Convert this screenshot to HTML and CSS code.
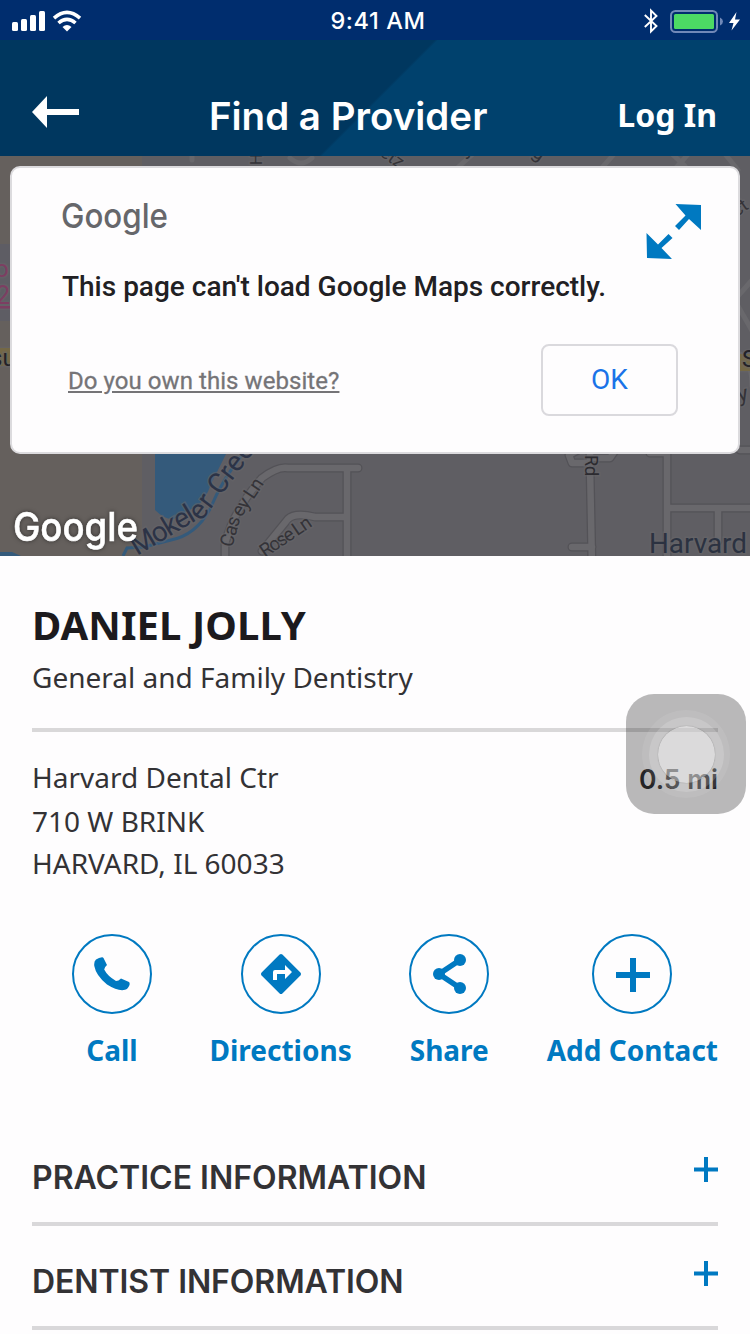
FILE: index.html
```html
<!DOCTYPE html>
<html lang="en">
<head>
<meta charset="utf-8">
<title>Find a Provider</title>
<link rel="stylesheet" href="styles.css">
</head>
<body>
<div class="status">
  <svg class="status-left" width="70" height="22" viewBox="0 0 70 22">
    <g fill="#fff">
      <rect x="0" y="12" width="6" height="9" rx="1.5"/><rect x="9" y="9" width="6" height="12" rx="1.5"/>
      <rect x="18" y="5" width="6" height="16" rx="1.5"/><rect x="27" y="1" width="6" height="20" rx="1.5"/>
      <path d="M50.500 17Q55 13 59.500 17L55 21.400Z"/>
    </g>
    <g fill="none" stroke="#fff" stroke-width="3.600"><path d="M42 8.200Q55-3.300 68 8.200"/><path d="M46.500 13Q55 5.600 63.500 13"/></g>
  </svg>
  <span class="time">9:41 AM</span>
  <svg class="status-right" width="100" height="26" viewBox="0 0 100 26">
    <path d="M.8 7 12.500 18 7 23.500V2.500L12.500 8 .8 19" fill="none" stroke="#fff" stroke-width="1.900"/>
    <rect x="27" y="3" width="46" height="21" rx="4.500" fill="none" stroke="#7189b8" stroke-width="2"/>
    <rect x="30" y="6" width="40" height="15" rx="1.500" fill="#4cd964"/>
    <path d="M76 9.500Q79 11 79 13.500T76 17.500Z" fill="#7189b8"/>
    <path d="M92.500 4 85 15H89.500L87.500 22.500 96 11.500H91Z" fill="#fff"/>
  </svg>
</div>

<header class="header">
  <svg class="back" width="47" height="32" viewBox="0 0 47 32"><path d="M0 16 15 0V13H47V19H15V32Z" fill="#fff"/></svg>
  <h1 class="header-title">Find a Provider</h1>
  <a class="login">Log In</a>
</header>

<section class="map">
  <svg class="map-canvas" width="750" height="400" viewBox="0 0 750 400">
    <rect width="750" height="400" fill="#5f5e63"/>
    <path d="M0 0H142V400H0Z" fill="#65605d"/>
    <path d="M0 88H12V165H0Z" fill="#5e5d64"/>
    <path d="M155 290H230L211 328Q206 343 197 350L174 363Q165 364 155 354Z" fill="#345a7b"/>
    <path d="M0 396H12L21 400H0Z" fill="#345a7b"/>
    <path d="M243 298Q223 322 210 353Q196 379 171 384L144 391 127 392 123 400" fill="none" stroke="#345a7b" stroke-width="3"/>
    <g fill="none" stroke="#535257" stroke-width="9" stroke-linejoin="round" stroke-linecap="round">
      <path d="M225 405V388Q233 355 262 322Q278 310 288 312H358M347 312V405M347 361H315Q295 356 288 363L262 395"/>
      <path d="M590 290V310L592 410M590 307H572L569 299 580 293M592 391H572M592 302H610L617 292M667 290V405M667 352H760M718 352V385M650 297H667M740 294H760"/>
    </g>
    <g fill="none" stroke="#69686c" stroke-width="6.500" stroke-linejoin="round" stroke-linecap="round">
      <path d="M225 405V388Q233 355 262 322Q278 310 288 312H358M347 312V405M347 361H315Q295 356 288 363L262 395"/>
      <path d="M590 290V310L592 410M590 307H572L569 299 580 293M592 391H572M592 302H610L617 292M667 290V405M667 352H760M718 352V385M650 297H667M740 294H760"/>
      <path d="M455 14 475-4M600 14 615-3M670-4 685 10M675 13 690-4M725-2 738 14M192-6V4M290 2Q301 12 312 2M738 140 760 115M738 150 755 180M740 198Q752 205 752 230" stroke-width="5"/>
    </g>
    <g class="map-label">
      <text transform="translate(137 400) rotate(-31)" font-size="28" fill="#2c3346" textLength="70">Mokel</text>
      <text transform="translate(201 366) rotate(-53)" font-size="28" fill="#2c3346" textLength="105">er Creek</text>
      <text transform="translate(232 392) rotate(-74)" font-size="19" fill="#343338" textLength="31">Cas</text>
      <text transform="translate(241 362) rotate(-56)" font-size="19" fill="#343338" textLength="42">ey Ln</text>
      <text transform="translate(265 402) rotate(-34)" font-size="19" fill="#343338" textLength="58">Rose Ln</text>
      <text transform="translate(585 299) rotate(90)" font-size="18" fill="#2c2b30">Rd</text>
      <text x="649" y="397" font-size="28" fill="#2b3241" textLength="98" lengthAdjust="spacingAndGlyphs">Harvard</text>
      <text transform="translate(262 9) rotate(-90)" font-size="16" fill="#343338">H</text>
      <text transform="translate(379 -1) rotate(35)" font-size="18" fill="#343338">etz</text>
      <text transform="translate(531 -1) rotate(35)" font-size="20" fill="#343338">g</text>
      <text x="465" y="-1" font-size="20" fill="#343338">y</text>
      <text x="-5" y="121" font-size="24" fill="#7d3e62">o</text>
      <text x="-4" y="148" font-size="25" fill="#7d3e62" text-decoration="underline">2</text>
      <rect x="0" y="192" width="10" height="18" fill="#746846"/>
      <rect x="739" y="198" width="11" height="17" fill="#746846"/>
      <text x="-10" y="210" font-size="24" fill="#232228">su</text>
      <text x="742" y="211" font-size="24" fill="#232228">S</text>
      <text transform="translate(739 246) rotate(-12)" font-size="22" fill="#343338">y</text>
      <text transform="translate(737 61) rotate(-35)" font-size="18" fill="#343338">ct</text>
    </g>
    <text class="brand brand-shadow" x="13" y="384.500" font-size="40" textLength="125" lengthAdjust="spacingAndGlyphs">Google</text>
  </svg>
  <div class="dialog">
    <svg class="dialog-logo" width="110" height="42" viewBox="0 0 110 42">
      <text class="brand brand-gray" x="-1" y="27.500" font-size="34.500" textLength="107" lengthAdjust="spacingAndGlyphs">Google</text>
    </svg>
    <p class="dialog-title">This page can't load Google Maps correctly.</p>
    <div class="dialog-actions">
      <a class="dialog-link">Do you own this website?</a>
      <button class="dialog-ok">OK</button>
    </div>
    <svg class="expand" width="56" height="55" viewBox="0 0 56 55">
      <path d="M29.500 0 55 1V26L43 15 33 26 29 22 39.500 11.500ZM0.500 29 12 40.500 22.500 30 26.500 34 15.500 44 26 55 1 54Z" fill="#0079c1"/>
    </svg>
  </div>
</section>

<main class="content">
  <h2 class="name">DANIEL JOLLY</h2>
  <p class="specialty">General and Family Dentistry</p>
  <div class="location">
    <address class="address"><span class="line">Harvard Dental Ctr</span><span class="line line-street">710 W BRINK</span><span class="line">HARVARD, IL 60033</span></address>
    <span class="distance">0.5 mi</span>
  </div>
  <nav class="actions">
    <a class="action"><span class="ring">
      <svg width="36" height="34" viewBox="0 0 36 34"><path d="M2 2.500Q5 .500 8 .300Q9 .200 9.500 1L13 8Q10.500 10 10.200 12.500Q13.500 19 22 24Q24.500 24 27 21.500L35 25Q36 26 35.500 28Q34 32 31 32.800Q24 34.500 13 27.500Q2 18.500 .300 9Q-.300 4.500 2 2.500Z" fill="#0079c1"/></svg></span>
      <span class="action-label">Call</span></a>
    <a class="action"><span class="ring">
      <svg width="40" height="40" viewBox="0 0 40 40"><path d="M18.600.600Q20-.600 21.400.600L39.400 18.600Q40.600 20 39.400 21.400L21.400 39.400Q20 40.600 18.600 39.400L.600 21.400Q-.600 20 .600 18.600Z" fill="#0079c1"/><path d="M12 26V18Q12 16 14 16H24V11L31 18 24 25V20H16V26Z" fill="#fff"/></svg></span>
      <span class="action-label">Directions</span></a>
    <a class="action"><span class="ring">
      <svg class="share-icon" width="34" height="40" viewBox="0 0 34 40"><path d="M27 6 6 20 27 34" fill="none" stroke="#0079c1" stroke-width="5.500"/><g fill="#0079c1"><circle cx="27" cy="6" r="6"/><circle cx="6" cy="20" r="6"/><circle cx="27" cy="34" r="6"/></g></svg></span>
      <span class="action-label">Share</span></a>
    <a class="action"><span class="ring ring-add">
      <svg width="34" height="34" viewBox="0 0 34 34"><path d="M14 0H20V14H34V20H20V34H14V20H0V14H14Z" fill="#0079c1"/></svg></span>
      <span class="action-label">Add Contact</span></a>
  </nav>
  <section class="accordion">
    <div class="row"><h3 class="row-title title-practice">PRACTICE INFORMATION</h3>
      <svg width="24" height="25" viewBox="0 0 24 25"><path d="M10 0H14V10.500H24V14.500H14V25H10V14.500H0V10.500H10Z" fill="#0079c1"/></svg></div>
    <div class="row"><h3 class="row-title title-dentist">DENTIST INFORMATION</h3>
      <svg width="24" height="25" viewBox="0 0 24 25"><path d="M10 0H14V10.500H24V14.500H14V25H10V14.500H0V10.500H10Z" fill="#0079c1"/></svg></div>
  </section>
</main>

<div class="assistive"><span class="halo"><span class="halo-mid"><span class="halo-core"></span></span></span></div>
</body>
</html>
```
FILE: styles.css
```css
* { box-sizing: border-box; }
body {
  margin: 0;
  width: 750px;
  height: 1334px;
  overflow: hidden;
  position: relative;
  background: #fefdfe;
  font-family: "Noto Sans", sans-serif;
  color: #333235;
}
h1, h2, h3, p { margin: 0; }
svg { display: block; flex: none; }

.status {
  height: 40px;
  padding: 0 1px 0 12px;
  background: #002d6e;
  display: grid;
  grid-template-columns: 1fr auto 1fr;
  align-items: center;
}
.time {
  color: #fff;
  font: 500 23.5px/42px Inter, sans-serif;
  letter-spacing: .6px;
  margin-right: 5px;
}
.status-right { justify-self: end; margin-right: 5px; }

.header {
  height: 116px;
  padding: 0 33px 0 32px;
  display: flex;
  justify-content: space-between;
  align-items: flex-start;
  background: linear-gradient(135deg, #00375f 50.2%, #00416d 50.6%);
  color: #fff;
}
.back { margin-top: 56px; }
.header-title {
  margin-top: 52px;
  font: 600 38.5px/48px Inter, sans-serif;
  white-space: nowrap;
}
.login {
  margin-top: 55px;
  font-weight: 700;
  font-size: 32px;
  line-height: 40px;
}

.map {
  position: relative;
  height: 400px;
  padding: 10px;
  overflow: hidden;
}
.map-canvas { position: absolute; inset: 0; }
.map-label {
  font-family: Roboto, sans-serif;
  paint-order: stroke;
  stroke: #67666a;
  stroke-width: 3px;
  stroke-opacity: .5;
}
.brand { font-family: Inter, sans-serif; font-weight: 500; }
.brand-gray { fill: #66676b; }
.brand-shadow {
  fill: #fff;
  stroke: #fff;
  stroke-width: .6px;
  filter: drop-shadow(0 0 2px rgba(0, 0, 0, .5));
}

.dialog {
  position: relative;
  height: 288px;
  padding: 28px 60px 0 50px;
  border: 2px solid #dcdbde;
  border-radius: 10px;
  background: #fefdfe;
  font-family: Roboto, sans-serif;
}
.dialog-logo { margin-top: 4px; }
.dialog-title {
  margin-top: 27px;
  font-size: 28px;
  font-weight: 500;
  line-height: 36px;
  color: #212023;
  white-space: nowrap;
}
.dialog-actions {
  margin-top: 39px;
  padding-left: 6px;
  display: flex;
  justify-content: space-between;
  align-items: center;
}
.dialog-link {
  padding-top: 2px;
  font-size: 24px;
  line-height: 30px;
  letter-spacing: .06px;
  color: #757477;
  text-decoration: underline;
  -webkit-text-stroke: .3px #757477;
}
.dialog-ok {
  width: 137px;
  height: 72px;
  padding: 0;
  border: 2px solid #dad9dd;
  border-radius: 8px;
  background: transparent;
  color: #1a73e8;
  font: 400 28px/68px Roboto, sans-serif;
}
.expand { position: absolute; left: 634px; top: 36px; }

.content { padding: 43px 32px 0; }
.name {
  color: #1c1a1d;
  font-size: 40px;
  line-height: 52px;
  letter-spacing: .08px;
}
.specialty {
  margin-top: 6px;
  font-size: 28px;
  line-height: 40px;
}
.location {
  margin-top: 31px;
  padding-top: 24px;
  border-top: 4px solid #d9d8d9;
  display: flex;
  justify-content: space-between;
}
.address {
  font-size: 28px;
  line-height: 43px;
  font-style: normal;
}
.line { display: block; }
.line-street { padding-top: 1px; line-height: 42px; padding-bottom: 0; }
.distance { font: 600 26.5px/46px Inter, sans-serif; }

.actions {
  margin: 49px 0 0 40px;
  display: flex;
  justify-content: space-between;
}
.action { display: flex; flex-direction: column; align-items: center; }
.ring {
  width: 80px;
  height: 80px;
  border: 2px solid #0079c1;
  border-radius: 50%;
  display: flex;
  align-items: center;
  justify-content: center;
}
.ring-add { padding: 2px 0 0 2px; }
.share-icon { margin-left: 2px; }
.action-label {
  margin-top: 16px;
  color: #0079c1;
  font-weight: 700;
  font-size: 28px;
  line-height: 40px;
  white-space: nowrap;
}

.accordion { margin-top: 52px; }
.row {
  height: 104px;
  padding-top: 35px;
  border-bottom: 4px solid #d9d8da;
  display: flex;
  justify-content: space-between;
  align-items: flex-start;
}
.row-title { padding-top: 1px; font: 600 32px/40px Inter, sans-serif; white-space: nowrap; }
.title-dentist { letter-spacing: -.08px; }

.assistive {
  position: absolute;
  left: 626px;
  top: 694px;
  width: 120px;
  height: 120px;
  border-radius: 28px;
  background: rgba(0, 0, 0, .27);
  display: grid;
  place-items: center;
}
.halo, .halo-mid, .halo-core { display: grid; place-items: center; border-radius: 50%; }
.halo { width: 88px; height: 88px; background: rgba(255, 255, 255, .08); }
.halo-mid { width: 75px; height: 75px; background: rgba(255, 255, 255, .16); }
.halo-core { width: 57px; height: 57px; background: rgba(255, 255, 255, .34); box-shadow: 0 0 1px rgba(0, 0, 0, .4); }
```
